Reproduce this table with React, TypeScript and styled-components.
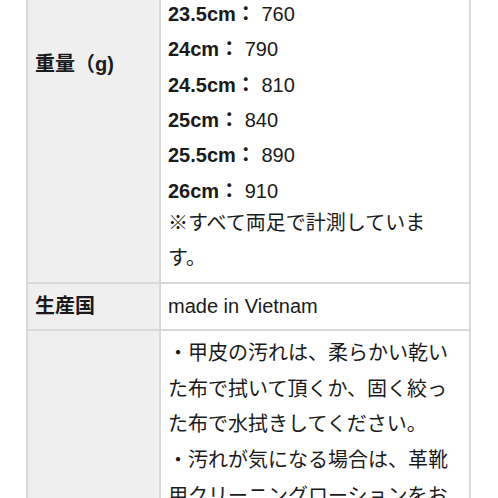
import { createGlobalStyle } from "styled-components";
import styled from "styled-components";

const GlobalStyle = createGlobalStyle`
  html, body {
    margin: 0;
    padding: 0;
    background: #ffffff;
  }
  body {
    font-family: "Liberation Sans", "Noto Sans CJK JP", sans-serif;
    color: #1a1a1a;
    overflow: hidden;
  }
`;

const Page = styled.div`
  width: 498px;
  height: 498px;
  overflow: hidden;
  padding-left: 26px;
  box-sizing: border-box;
`;

const SpecTable = styled.table`
  width: 445px;
  margin-top: -154px;
  border-collapse: collapse;
  font-size: 20px;
  line-height: 35.3px;
`;

const LabelCell = styled.th`
  width: 117px;
  background: #efefef;
  border: 2px solid #d9d9d9;
  padding: 5px 7px;
  text-align: left;
  vertical-align: middle;
  font-weight: 700;
`;

const ValueCell = styled.td`
  background: #ffffff;
  border: 2px solid #d9d9d9;
  padding: 5px 7px;
  vertical-align: top;
  line-break: strict;
`;

const WeightLine = styled.div`
  padding-top: 6px;
  line-height: 29.3px;
`;

const CareLine = styled.div`
  line-height: 35.8px;
`;

const Size = styled.b`
  font-weight: 700;
`;

const weights: [string, number][] = [
  ["21.5cm", 660],
  ["22cm", 690],
  ["22.5cm", 710],
  ["23cm", 730],
  ["23.5cm", 760],
  ["24cm", 790],
  ["24.5cm", 810],
  ["25cm", 840],
  ["25.5cm", 890],
  ["26cm", 910],
];

const care = [
  "・甲皮の汚れは、柔らかい乾いた布で拭いて頂くか、固く絞った布で水拭きしてください。",
  "・汚れが気になる場合は、革靴用クリーニングローションをお使いください。",
  "・濡れた場合は、風通しの良い日陰で自然乾燥させてください。直射日光やドライヤーでの乾燥はお避けください。",
  "・保管の際は、シューキーパーを入れて形を整えてください。",
];

export default function App() {
  return (
    <>
      <GlobalStyle />
      <Page>
        <SpecTable>
          <tbody>
            <tr>
              <LabelCell>重量（g)</LabelCell>
              <ValueCell>
                {weights.map(([size, g]) => (
                  <WeightLine key={size}>
                    <Size>{size}：</Size> {g}
                  </WeightLine>
                ))}
                ※すべて両足で計測しています。
              </ValueCell>
            </tr>
            <tr>
              <LabelCell>生産国</LabelCell>
              <ValueCell>made in Vietnam</ValueCell>
            </tr>
            <tr>
              <LabelCell>お手入れ</LabelCell>
              <ValueCell>
                {care.map((line) => (
                  <CareLine key={line}>{line}</CareLine>
                ))}
              </ValueCell>
            </tr>
          </tbody>
        </SpecTable>
      </Page>
    </>
  );
}
